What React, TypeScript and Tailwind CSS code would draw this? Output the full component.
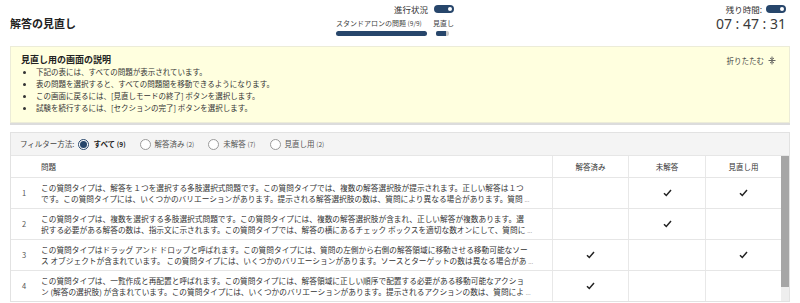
import React from 'react'

const bullets = [
  '下記の表には、すべての問題が表示されています。',
  '表の問題を選択すると、すべての問題間を移動できるようになります。',
  'この画面に戻るには、[見直しモードの終了] ボタンを選択します。',
  '試験を続行するには、[セクションの完了] ボタンを選択します。',
]

const filters = [
  { label: 'すべて', count: 9, on: true },
  { label: '解答済み', count: 2, on: false },
  { label: '未解答', count: 7, on: false },
  { label: '見直し用', count: 2, on: false },
]

const rows = [
  {
    n: 1,
    l1: 'この質問タイプは、解答を１つを選択する多肢選択式問題です。この質問タイプでは、複数の解答選択肢が提示されます。正しい解答は１つ',
    l2: 'です。この質問タイプには、いくつかのバリエーションがあります。提示される解答選択肢の数は、質問により異なる場合があります。質問',
    done: false,
    open: true,
    review: true,
  },
  {
    n: 2,
    l1: 'この質問タイプは、複数を選択する多肢選択式問題です。この質問タイプには、複数の解答選択肢が含まれ、正しい解答が複数あります。選',
    l2: '択する必要がある解答の数は、指示文に示されます。この質問タイプでは、解答の横にあるチェック ボックスを適切な数オンにして、質問に',
    done: false,
    open: true,
    review: false,
  },
  {
    n: 3,
    l1: 'この質問タイプはドラッグ アンド ドロップと呼ばれます。この質問タイプには、質問の左側から右側の解答領域に移動させる移動可能なソー',
    l2: 'ス オブジェクトが含まれています。 この質問タイプには、いくつかのバリエーションがあります。ソースとターゲットの数は異なる場合があ',
    done: true,
    open: false,
    review: true,
  },
  {
    n: 4,
    l1: 'この質問タイプは、一覧作成と再配置と呼ばれます。この質問タイプには、解答領域に正しい順序で配置する必要がある移動可能なアクショ',
    l2: 'ン (解答の選択肢) が含まれています。この質問タイプには、いくつかのバリエーションがあります。提示されるアクションの数は、質問によ',
    done: true,
    open: false,
    review: false,
  },
]

function Toggle() {
  return (
    <span className="inline-flex items-center justify-end w-[20px] h-[8px] rounded-full bg-[#27466b] pr-[2px]">
      <span className="w-[4px] h-[4px] rounded-full bg-white" />
    </span>
  )
}

function Check({ show }: { show: boolean }) {
  return (
    <div className="flex items-center justify-center border-l border-[#e8e8e8]">
      {show && (
        <svg width="9" height="8" viewBox="0 0 9 8">
          <polyline points="1,4.2 3.3,6.5 8,1" fill="none" stroke="#222" strokeWidth="1.5" />
        </svg>
      )}
    </div>
  )
}

export default function App() {
  return (
    <div className="w-[800px] h-[303px] overflow-hidden bg-white text-[#333] font-['Noto_Sans_CJK_JP','Noto_Sans',sans-serif]">
      {/* header */}
      <div className="flex h-[46px] pl-[10px] pr-[14px]">
        <div className="w-[325px] flex items-center pt-[1px]">
          <h1 className="text-[11px] font-bold text-[#222] leading-none">解答の見直し</h1>
        </div>
        <div className="w-[120px] pt-[4px]">
          <div className="flex items-center justify-end gap-[6px] h-[10px] pr-[1px]">
            <span className="text-[8.5px] leading-none text-[#333]">進行状況</span>
            <Toggle />
          </div>
          <div className="flex gap-[6px] mt-[5px] pl-[1px]">
            <div className="w-[91px]">
              <div className="text-[7px] leading-[8px] whitespace-nowrap text-[#444]">
                スタンドアロンの問題 <span className="text-[6.5px]">(9/9)</span>
              </div>
              <div className="mt-[4px] h-[5px] rounded-full bg-[#27466b]" />
            </div>
            <div className="w-[18px]">
              <div className="text-[7px] leading-[8px] whitespace-nowrap text-[#444]">見直し</div>
              <div className="mt-[4px] ml-[3px] w-[13px] h-[5px] rounded-[2px] bg-[#c9c9c9] overflow-hidden">
                <div className="w-[10px] h-full bg-[#27466b]" />
              </div>
            </div>
          </div>
        </div>
        <div className="flex-1" />
        <div className="flex flex-col items-end pt-[4px]">
          <div className="flex items-center gap-[4px] h-[10px]">
            <span className="text-[8.5px] leading-none text-[#333]">残り時間:</span>
            <Toggle />
          </div>
          <div className="text-[14px] leading-[16px] mt-[2px] text-[#3a3a3a] font-['Noto_Sans',sans-serif]">
            07 : 47 : 31
          </div>
        </div>
      </div>

      {/* info box */}
      <div className="mx-[10px] h-[77px] bg-[#ffffdf] border border-[#ececd8] shadow-[0_2px_0_#dcdcdc] flex pl-[10px] pr-[13px] pt-[7px]">
        <div className="flex-1">
          <div className="text-[9px] font-bold leading-[12px] text-[#222]">見直し用の画面の説明</div>
          <ul>
            {bullets.map(b => (
              <li key={b} className="flex items-center h-[12px] text-[7.5px] text-[#333]">
                <span className="w-[3px] h-[3px] rounded-full bg-[#333] ml-[2px] mr-[10px]" />
                {b}
              </li>
            ))}
          </ul>
        </div>
        <div className="flex items-start gap-[4px] h-[12px] pt-[2px]">
          <span className="text-[7.5px] leading-[9px] text-[#444]">折りたたむ</span>
          <svg width="8" height="9" viewBox="0 0 8 9">
            <path d="M4 0.5 V3.5 M2 2 L4 3.5 L6 2 M0.5 4.5 H7.5 M4 8.5 V5.5 M2 7 L4 5.5 L6 7" fill="none" stroke="#555" strokeWidth="0.9" />
          </svg>
        </div>
      </div>

      {/* filter + table */}
      <div className="mx-[10px] mt-[9px] border border-[#e2e2e2]">
        <div className="flex items-center h-[23px] bg-[#f4f4f4] pl-[9px] text-[7.5px] text-[#444] border-b border-[#e6e6e6]">
          <span className="mr-[4px]">フィルター方法:</span>
          {filters.map(f => (
            <label key={f.label} className="flex items-center mr-[14px]">
              {f.on ? (
                <span className="w-[11px] h-[11px] rounded-full border border-[#27466b] flex items-center justify-center mr-[4px] bg-white">
                  <span className="w-[7px] h-[7px] rounded-full bg-[#27466b]" />
                </span>
              ) : (
                <span className="w-[11px] h-[11px] rounded-full border border-[#9a9a9a] bg-white mr-[4px]" />
              )}
              <span className={f.on ? 'font-bold text-[#222]' : 'text-[#555]'}>
                {f.label} <span className="text-[6.5px]">({f.count})</span>
              </span>
            </label>
          ))}
        </div>
        <div className="flex">
          <div className="flex-1">
            <div className="grid grid-cols-[30px_1fr_76px_77px_76px] h-[21px] text-[7.5px] text-[#333]">
              <div />
              <div className="flex items-center">問題</div>
              <div className="flex items-center justify-center border-l border-[#e8e8e8]">解答済み</div>
              <div className="flex items-center justify-center border-l border-[#e8e8e8]">未解答</div>
              <div className="flex items-center justify-center border-l border-[#e8e8e8]">見直し用</div>
            </div>
            {rows.map(r => (
              <div key={r.n} className="grid grid-cols-[30px_1fr_76px_77px_76px] h-[31px] border-t border-[#e6e6e6]">
                <div className="flex items-center pl-[11px] text-[7.5px] text-[#555]">{r.n}</div>
                <div className="flex flex-col justify-center text-[7.7px] leading-[11px] text-[#333] whitespace-nowrap overflow-hidden">
                  <div>{r.l1}</div>
                  <div>
                    {r.l2} <span className="text-[#888] text-[6px]">...</span>
                  </div>
                </div>
                <Check show={r.done} />
                <Check show={r.open} />
                <Check show={r.review} />
              </div>
            ))}
          </div>
          <div className="w-[8px] bg-[#eeeeee] flex flex-col">
            <div className="h-[131px] bg-[#a6a6a6]" />
          </div>
        </div>
      </div>
    </div>
  )
}
